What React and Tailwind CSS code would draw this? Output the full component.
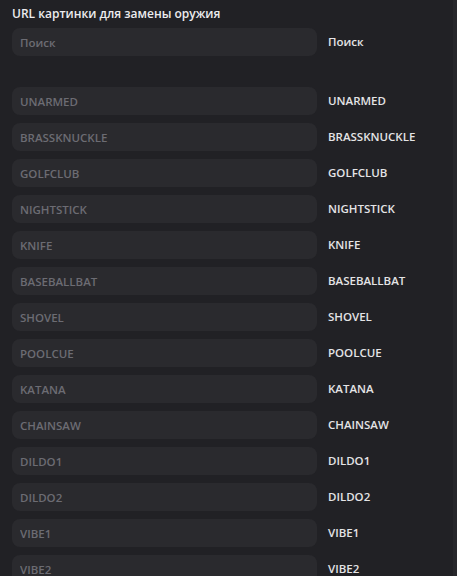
const WEAPONS = [
  "UNARMED",
  "BRASSKNUCKLE",
  "GOLFCLUB",
  "NIGHTSTICK",
  "KNIFE",
  "BASEBALLBAT",
  "SHOVEL",
  "POOLCUE",
  "KATANA",
  "CHAINSAW",
  "DILDO1",
  "DILDO2",
  "VIBE1",
  "VIBE2",
];

function Row({ name }) {
  return (
    <div className="flex items-center h-[28px]">
      <input
        type="text"
        placeholder={name}
        className="w-[305px] h-[28px] rounded-lg bg-[#2a2a2e] px-2 text-[11.5px] font-semibold text-[#d0d0d4] placeholder:text-[#6c6c73] focus:outline-none"
      />
      <span className="ml-[11px] text-[11.5px] font-semibold text-[#e4e4e6]">{name}</span>
    </div>
  );
}

export default function App() {
  return (
    <div
      className="flex h-[576px] w-[457px] overflow-hidden bg-[#212125]"
      style={{ fontFamily: '"Open Sans", "Noto Sans", sans-serif' }}
    >
      <div className="flex-1 pl-3 pt-[5px]">
        {/* HEADER */}
        <h1 className="text-[12px] font-semibold text-[#ececee] leading-[18px]">
          URL картинки для замены оружия
        </h1>

        {/* SEARCH */}
        <div className="mt-[5px]">
          <Row name="Поиск" />
        </div>

        {/* WEAPONS */}
        <div className="mt-[31px] flex flex-col gap-[8px]">
          {WEAPONS.map((w) => (
            <Row key={w} name={w} />
          ))}
        </div>
      </div>

      {/* scrollbar track */}
      <div className="w-[4px] bg-[#27272b]" />
    </div>
  );
}
